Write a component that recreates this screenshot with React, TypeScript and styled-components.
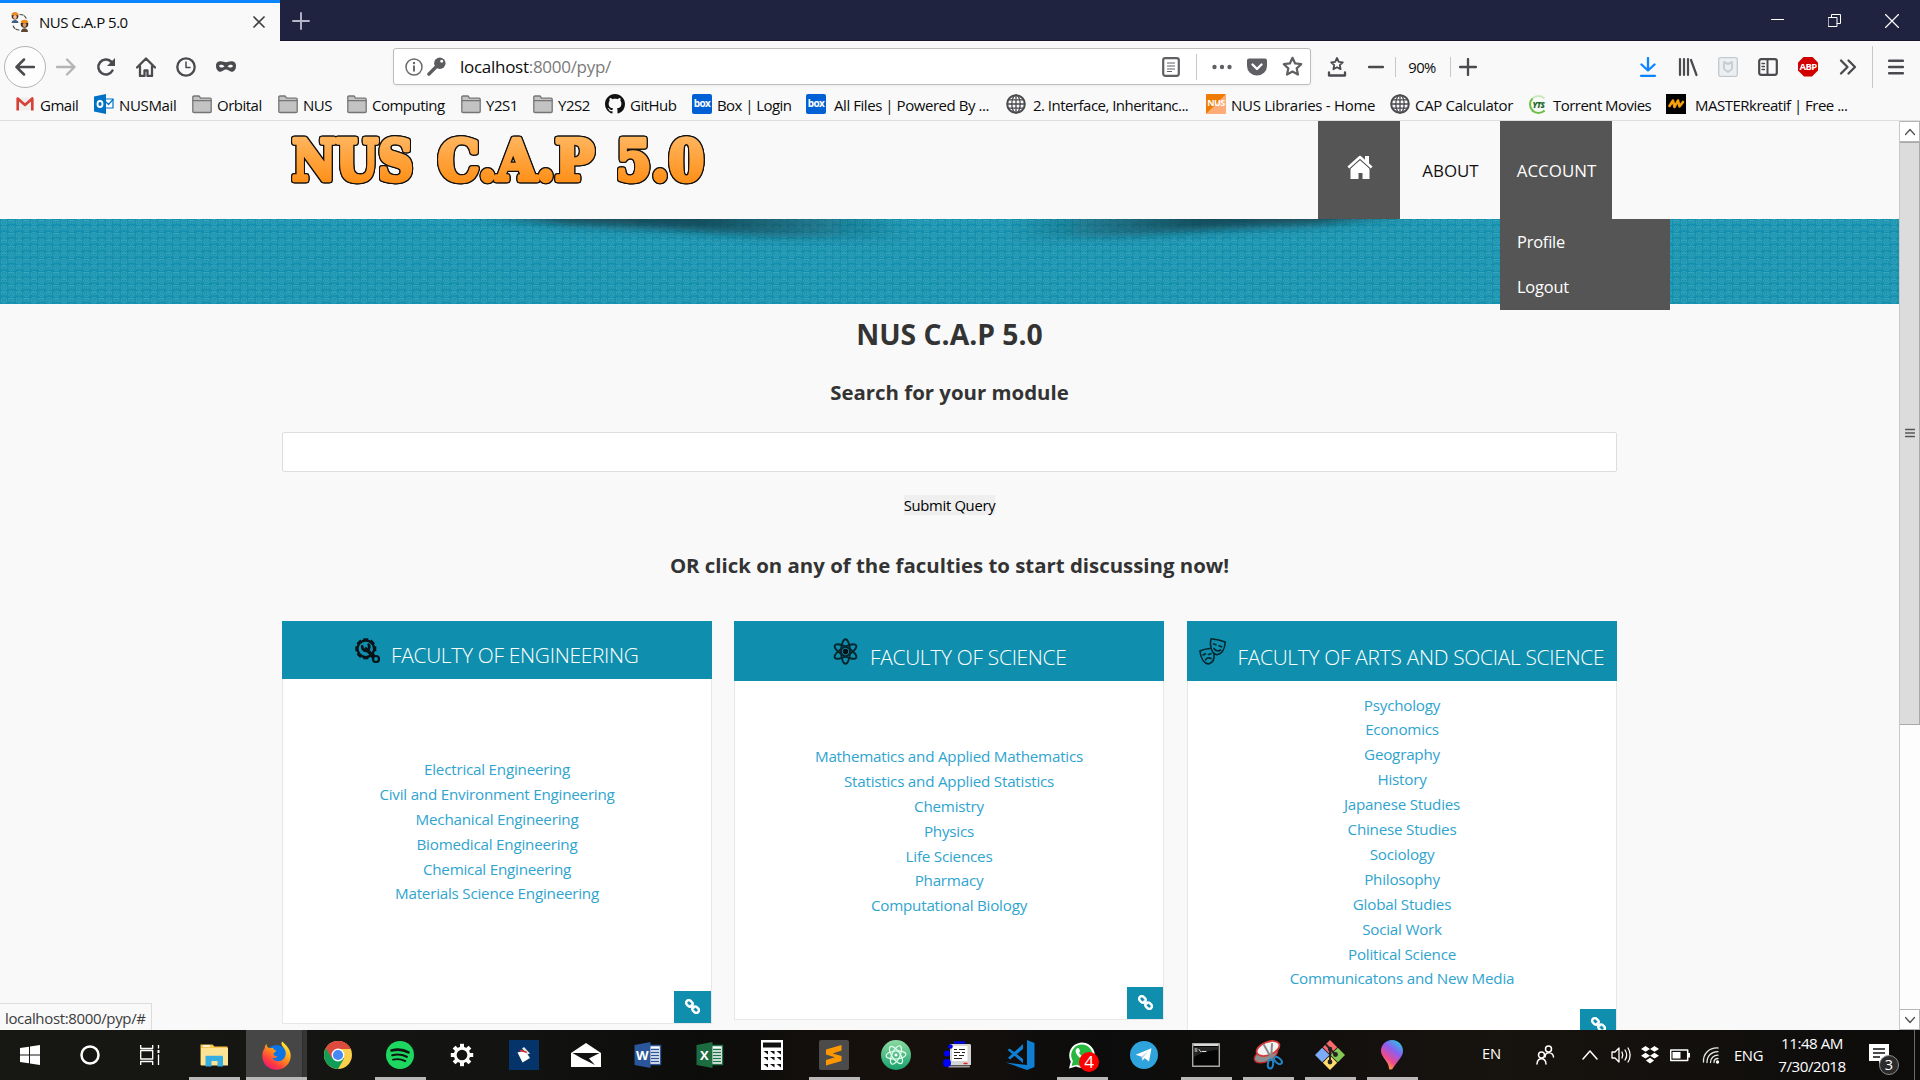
import React from "react";
import styled, { createGlobalStyle, css } from "styled-components";

const UI_FONT = `"Open Sans", "Noto Sans", sans-serif`;
const TEAL = "#0f8fad";

const GlobalStyle = createGlobalStyle`
  * { box-sizing: border-box; }
  html, body { margin: 0; padding: 0; overflow: hidden; background: #f9f9f9; }
  ul { list-style: none; margin: 0; padding: 0; }
  h1, h2, h3, p { margin: 0; }
  svg { display: block; flex: none; }
`;

const Screen = styled.div`
  width: 1920px;
  height: 1080px;
  display: flex;
  flex-direction: column;
  overflow: hidden;
  font-family: ${UI_FONT};
  white-space: nowrap;
`;

/* ---------- window chrome ---------- */

const TitleBar = styled.div`
  height: 41px;
  display: flex;
  background: #202340;
  box-shadow: inset 0 -1px 0 #15162c;
`;

const Tab = styled.div`
  width: 280px;
  display: flex;
  align-items: center;
  padding: 0 15px 0 10px;
  border-top: 3px solid #0a84ff;
  background: #f9f9f9;
`;

const TabTitle = styled.span`
  flex: 1;
  margin-left: 9px;
  font-size: 15px;
  letter-spacing: -0.5px;
  color: #0c0c0d;
`;

const NewTab = styled.div`
  width: 41px;
  display: grid;
  place-items: center;
`;

const WindowButtons = styled.div`
  margin-left: auto;
  display: flex;
`;

const WindowButton = styled.div`
  width: 57px;
  display: grid;
  place-items: center;
`;

const Toolbar = styled.div`
  height: 51px;
  display: flex;
  align-items: center;
  padding-left: 4px;
  background: #f9f9f9;
`;

const BackButton = styled.div`
  width: 42px;
  height: 42px;
  border: 1px solid #b4b4b4;
  border-radius: 50%;
  display: grid;
  place-items: center;
  background: #fdfdfd;
`;

const Tool = styled.div<{ $w?: number }>`
  width: ${(p) => p.$w ?? 40}px;
  height: 42px;
  display: grid;
  place-items: center;
`;

const ToolRule = styled.div<{ $h: number }>`
  width: 1px;
  height: ${(p) => p.$h}px;
  background: #c8c8c8;
`;

const AddressBar = styled.div`
  width: 918px;
  height: 37px;
  margin: 0 6px 0 147px;
  padding-left: 11px;
  display: flex;
  align-items: center;
  border: 1px solid #bdbdbd;
  border-radius: 3px;
  background: #fff;
  box-shadow: 0 1px 3px rgba(0, 0, 0, 0.06);
`;

const Address = styled.span`
  flex: 1;
  margin-left: 10px;
  font-size: 17px;
  letter-spacing: -0.28px;
  color: #7a7a7a;
  b { font-weight: 400; color: #0c0c0d; }
`;

const Zoom = styled.span`
  width: 52px;
  margin-right: 2px;
  text-align: center;
  font-size: 14.8px;
  letter-spacing: -0.55px;
  color: #0c0c0d;
`;

const Spacer = styled.div`
  flex: 1;
`;

const BookmarkBar = styled.div`
  height: 29px;
  display: flex;
  align-items: center;
  padding: 0 0 4px 16px;
  border-bottom: 1px solid #dedede;
  background: #f9f9f9;
`;

const Bookmark = styled.div<{ $w: number; $gap: number; $ls: number }>`
  width: ${(p) => p.$w}px;
  flex: none;
  display: flex;
  align-items: center;
  gap: ${(p) => p.$gap}px;
  font-size: 15px;
  line-height: 20px;
  letter-spacing: ${(p) => p.$ls}px;
  color: #0c0c0d;
`;

const BookmarkLabel = styled.span`
  padding-top: 2px;
`;

const BoxTile = styled.span`
  width: 20px;
  height: 20px;
  border-radius: 2px;
  background: #0061d5;
  color: #fff;
  font: 700 10px/19px "Open Sans", sans-serif;
  letter-spacing: -0.6px;
  text-align: center;
`;

const NusTile = styled.span`
  width: 20px;
  height: 20px;
  border-radius: 1px;
  background: linear-gradient(135deg, #ef7c00 0 48%, #ffab78 52% 100%);
  color: #fff;
  font: 700 9px/18px "Open Sans", sans-serif;
  letter-spacing: -0.5px;
  text-align: center;
`;

const YtsTile = styled.span`
  width: 19px;
  height: 19px;
  border: 2px solid #6ac045;
  border-right-color: transparent;
  border-top-color: #c9e8bb;
  border-radius: 50%;
  color: #1d6b2a;
  font: italic 800 8px/15px "Open Sans", sans-serif;
  letter-spacing: -0.6px;
  text-align: center;
`;

const AbpText = styled.span`
  width: 20px;
  height: 20px;
  clip-path: polygon(30% 0, 70% 0, 100% 30%, 100% 70%, 70% 100%, 30% 100%, 0 70%, 0 30%);
  background: #d00000;
  color: #fff;
  font: 700 9.5px/20px "Open Sans", sans-serif;
  letter-spacing: -0.6px;
  text-align: center;
`;

/* ---------- web page ---------- */

const Viewport = styled.div`
  height: 909px;
  display: flex;
  position: relative;
  overflow: hidden;
  background: #f9f9f9;
`;

const Page = styled.div`
  width: 1899px;
  height: 909px;
  overflow: hidden;
`;

const Container = styled.div`
  width: 1335px;
  margin: 0 auto;
`;

const Header = styled(Container)`
  height: 98px;
  display: flex;
  padding: 0 5px 0 6px;
  justify-content: space-between;
`;

const Nav = styled.nav`
  display: flex;
`;

const NavItem = styled.div<{ $w: number; $on?: boolean }>`
  position: relative;
  width: ${(p) => p.$w}px;
  height: 98px;
  display: grid;
  place-items: center;
  padding: 1px 0 0 1px;
  font-size: 16.9px;
  color: #111;
  > svg { margin-bottom: 8px; }
  ${(p) => p.$on && css`
    background: #555;
    color: #fff;
  `}
`;

const Dropdown = styled.ul`
  position: absolute;
  z-index: 2;
  top: 98px;
  left: 0;
  width: 170px;
  background: #555;
`;

const DropdownItem = styled.li`
  height: 45px;
  padding-left: 17px;
  font-size: 16.4px;
  letter-spacing: -0.2px;
  line-height: 46px;
  color: #fff;
  &:last-child { height: 46px; }
`;

const Band = styled.div`
  height: 85px;
  background: ${TEAL};
  svg { width: 100%; height: 100%; }
`;

const Hero = styled(Container)`
  height: 317px;
  display: flex;
  flex-direction: column;
  align-items: center;
  color: #333;
`;

const Title = styled.h1`
  margin-top: 11px;
  font-size: 28.3px;
  line-height: 38px;
  font-weight: 700;
`;

const Subtitle = styled.h2<{ $top: number }>`
  margin-top: ${(p) => p.$top}px;
  font-size: 20.4px;
  line-height: 28px;
  font-weight: 700;
`;

const SearchInput = styled.input`
  width: 100%;
  height: 40px;
  margin-top: 26px;
  flex: none;
  border: 1px solid #ddd;
  border-radius: 2px;
  background: #fff;
`;

const Submit = styled.button`
  height: 20px;
  margin-top: 23px;
  padding: 0;
  border: 0;
  background: #efefef;
  font: 14.8px/21px ${UI_FONT};
  letter-spacing: -0.3px;
  color: #000;
`;

const Cards = styled(Container)`
  display: grid;
  grid-template-columns: 452px 453px 430px;
  align-items: start;
`;

const Card = styled.section<{ $h: number }>`
  width: 430px;
  height: ${(p) => p.$h}px;
  display: flex;
  flex-direction: column;
`;

const CardHead = styled.header<{ $h: number; $pad: number; $gap: number }>`
  height: ${(p) => p.$h}px;
  flex: none;
  display: flex;
  padding-left: ${(p) => p.$pad}px;
  gap: ${(p) => p.$gap}px;
  background: ${TEAL};
  svg { margin-top: 17px; }
`;

const CardTitle = styled.h3`
  align-self: flex-end;
  font-size: 20.9px;
  line-height: 28px;
  padding-bottom: 10px;
  font-weight: 300;
  letter-spacing: -0.29px;
  color: #fff;
`;

const CardBody = styled.div<{ $top: number }>`
  flex: 1;
  display: flex;
  flex-direction: column;
  padding-top: ${(p) => p.$top}px;
  border: 1px solid #e7e7e7;
  border-top: 0;
  background: #fff;
`;

const Topic = styled.li`
  height: 24.9px;
  font-size: 15.2px;
  line-height: 25px;
  letter-spacing: -0.22px;
  text-align: center;
  color: #2fa4cf;
`;

const LinkButton = styled.div<{ $w: number }>`
  width: ${(p) => p.$w}px;
  height: 32px;
  margin: auto 0 0 auto;
  padding-bottom: 1px;
  display: grid;
  place-items: center;
  background: ${TEAL};
`;

const ScrollTrack = styled.div`
  width: 21px;
  display: flex;
  flex-direction: column;
  border-left: 1px solid #c8c8c8;
  background: #fdfdfd;
`;

const ScrollButton = styled.div`
  height: 21px;
  display: grid;
  place-items: center;
  border: 1px solid #b5b5b5;
  border-left: 0;
  background: #fff;
`;

const ScrollThumb = styled.div`
  height: 583px;
  margin-bottom: auto;
  padding-bottom: 2px;
  display: grid;
  place-items: center;
  border: 1px solid #a9a9a9;
  border-left: 0;
  background: #dcdcdc;
`;

const StatusText = styled.div`
  position: absolute;
  left: 0;
  bottom: 0;
  width: 152px;
  height: 27px;
  padding-left: 5px;
  border: 1px solid #dcdcdc;
  border-width: 1px 1px 0 0;
  background: #f9f9f9;
  font-size: 15px;
  line-height: 29px;
  letter-spacing: -0.35px;
  color: #3c3c3c;
`;

/* ---------- taskbar ---------- */

const Taskbar = styled.div`
  height: 50px;
  display: flex;
  background: linear-gradient(90deg, #171714 0, #131311 500px, #0c0c0b 700px, #17110d 900px, #0c0c0c 1100px, #17130f 1500px, #0d0c0b 100%);
  color: #fff;
`;

const Task = styled.div<{ $w?: number; $lift?: number }>`
  width: ${(p) => p.$w ?? 60}px;
  height: 50px;
  padding-bottom: ${(p) => p.$lift ?? 0}px;
  flex: none;
  display: grid;
  place-items: center;
`;

const AppTask = styled.div<{ $running?: boolean; $active?: boolean }>`
  width: 62px;
  height: 50px;
  flex: none;
  position: relative;
  display: grid;
  place-items: center;
  ${(p) => p.$running && css`
    background: linear-gradient(#b9b7b7, #b9b7b7) 6px 47px / 51px 3px no-repeat;
  `}
  ${(p) => p.$active && css`
    background:
      linear-gradient(#b9b7b7, #b9b7b7) 1px 47px / 61px 3px no-repeat,
      linear-gradient(90deg, #464646 56px, #2c2c2c 56px 57px, #363636 57px) 1px 0 / 61px 50px no-repeat;
  `}
`;

const Badge = styled.span`
  position: absolute;
  left: 28px;
  top: 22px;
  width: 20px;
  height: 20px;
  border-radius: 50%;
  background: #f00;
  font-size: 17px;
  line-height: 19px;
  text-align: center;
`;

const TrayText = styled.span`
  font-size: 14.8px;
  letter-spacing: -0.3px;
`;

const Clock = styled.div`
  width: 84px;
  display: flex;
  flex-direction: column;
  align-items: center;
  padding-top: 2px;
  font-size: 15.2px;
  line-height: 23px;
  letter-spacing: -0.5px;
`;

const Notifications = styled.div`
  position: relative;
  width: 61px;
  height: 50px;
  border-right: 1px solid #6a6a6a;
  svg { margin: 14px 0 0 15px; }
`;

const NoticeCount = styled.span`
  position: absolute;
  left: 25px;
  top: 25px;
  width: 20px;
  height: 20px;
  border: 1px solid #8b8b8b;
  border-radius: 50%;
  background: #2b2b2b;
  font-size: 14.5px;
  line-height: 18px;
  text-align: center;
`;

/* ---------- icons ---------- */

type IconProps = { size?: number; w?: number; h?: number; box?: string; children: React.ReactNode };

const Icon = ({ size = 20, w, h, box = "0 0 20 20", children }: IconProps) => (
  <svg width={w ?? size} height={h ?? size} viewBox={box} fill="none" strokeLinecap="round" strokeLinejoin="round">
    {children}
  </svg>
);

const INK = "#4a4a4f";

const Folder = () => (
  <Icon>
    <path d="M.8 17.5V3.2c0-.8.5-1.2 1.2-1.2h5l1.6 2.2H18c.8 0 1.2.5 1.2 1.2v12.1c0 .6-.4 1-1.2 1H2c-.7 0-1.2-.4-1.2-1z" fill="#c3c3c3" stroke="#757575" strokeWidth="1.3" />
    <path d="M1 6.6h18" stroke="#757575" strokeWidth="1.1" />
  </Icon>
);

const Globe = () => (
  <Icon>
    <circle cx="10" cy="10" r="8.8" stroke={INK} strokeWidth="2" />
    <ellipse cx="10" cy="10" rx="4.2" ry="8.8" stroke={INK} strokeWidth="1.3" />
    <path d="M10 1v18M1.5 10h17M2.6 5.8h14.8M2.6 14.2h14.8" stroke={INK} strokeWidth="1.3" />
  </Icon>
);

const Gmail = () => (
  <Icon>
    <path d="M.5 3.500h17v13H.5z" fill="#eee" />
    <path d="M1.700 16.500V4.500L9 11l7.300-6.500v12" stroke="#d93f35" strokeWidth="2.6" strokeLinecap="butt" />
  </Icon>
);

const Outlook = () => (
  <Icon>
    <path d="M10 5h9v9h-9z" fill="#fff" stroke="#0072c6" strokeWidth="1.2" />
    <path d="M11 7l3.5 3.5L19 5.5" stroke="#0072c6" strokeWidth="1.2" />
    <path d="M0 2.5L12 0v20L0 17.5z" fill="#0072c6" />
    <ellipse cx="6" cy="10" rx="2.5" ry="3" stroke="#fff" strokeWidth="1.8" />
  </Icon>
);

const GitHub = () => (
  <Icon size={20} box="0 0 16 16">
    <path fill="#111" d="M8 0C3.58 0 0 3.58 0 8c0 3.54 2.29 6.53 5.47 7.59.4.07.55-.17.55-.38 0-.19-.01-.82-.01-1.49-2.01.37-2.53-.49-2.69-.94-.09-.23-.48-.94-.82-1.13-.28-.15-.68-.52-.01-.53.63-.01 1.08.58 1.23.82.72 1.21 1.87.87 2.33.66.07-.52.28-.87.51-1.07-1.78-.2-3.64-.89-3.64-3.95 0-.87.31-1.59.82-2.15-.08-.2-.36-1.02.08-2.12 0 0 .67-.21 2.2.82.64-.18 1.32-.27 2-.27s1.36.09 2 .27c1.53-1.04 2.2-.82 2.2-.82.44 1.1.16 1.92.08 2.12.51.56.82 1.27.82 2.15 0 3.07-1.87 3.75-3.65 3.95.29.25.54.73.54 1.48 0 1.07-.01 1.93-.01 2.2 0 .21.15.46.55.38A8.01 8.01 0 0 0 16 8c0-4.42-3.58-8-8-8z" />
  </Icon>
);

const Kreatif = () => (
  <Icon>
    <path d="M0 0h20v20H0z" fill="#000" />
    <path d="M3.500 12l3.500-5.500L8.500 13 12 6.500l1.500 6L17 8" stroke="#f6a10a" strokeWidth="2.600" />
  </Icon>
);

const Favicon = () => (
  <Icon size={20}>
    <circle cx="5" cy="4" r="3.4" fill="#3b2a20" />
    <path d="M1.6 3.2a3.4 3 0 0 1 6.8 0z" fill="#f08c1e" />
    <circle cx="5" cy="5" r="1.9" fill="#f2c09a" />
    <path d="M1.5 11c0-4 7-4 7 0z" fill="#3f5f7d" />
    <circle cx="14.5" cy="12" r="3.8" fill="#3b2a20" />
    <path d="M10.8 11a3.7 3.2 0 0 1 7.4 0z" fill="#f08c1e" />
    <circle cx="14.5" cy="13" r="2" fill="#d99a62" />
    <path d="M11 20c0-5 7-5 7 0z" fill="#5a4632" />
    <path d="M10 2.500c3 0 5.500 1.500 6.200 4.200M9 18c-3 0-5-1.600-6-4.500" stroke="#444" strokeWidth="1.1" strokeDasharray="3 1.500" />
  </Icon>
);

const star = "M10 1.700l2.500 5.400 5.800.7-4.300 4 1.200 5.900L10 14.800l-5.200 2.900L6 11.800l-4.300-4 5.800-.7z";

const Gear = () => (
  <Icon size={24} box="0 0 24 24">
    {[0, 45, 90, 135, 180, 225, 270, 315].map((a) => (
      <path key={a} d="M12 .8v4.500" stroke="#fff" strokeWidth="4" strokeLinecap="butt" transform={`rotate(${a} 12 12)`} />
    ))}
    <circle cx="12" cy="12" r="6.800" stroke="#fff" strokeWidth="2.900" />
  </Icon>
);

const ChainIcon = () => (
  <Icon size={15} box="0 0 15 15">
    <g stroke="#fff" strokeWidth="2.400" transform="rotate(45 7.500 7.500)">
      <rect x="-.4" y="4.900" width="7" height="5.200" rx="2.600" />
      <rect x="8.400" y="4.900" width="7" height="5.200" rx="2.600" />
      <path d="M5.500 7.500h4" strokeWidth="1.800" />
    </g>
  </Icon>
);

const EngineeringIcon = () => (
  <Icon size={25} box="0 0 25 25">
    {[0, 45, 90, 135, 180, 225, 270, 315].map((a) => (
      <path key={a} d="M10.800 .3v3" stroke="#0a1418" strokeWidth="5" strokeLinecap="butt" transform={`rotate(${a} 10.800 10.800)`} />
    ))}
    <circle cx="10.800" cy="10.800" r="8.300" fill={TEAL} stroke="#0a1418" strokeWidth="2.300" />
    <path d="M11 11l8 8" stroke="#0a1418" strokeWidth="3.600" />
    <path d="M7.200 8.500c0 3.400 2.800 4.800 5 4 2.200-1 2.600-3.600 1.500-5.800" stroke="#0a1418" strokeWidth="2.800" />
    <circle cx="21" cy="21" r="3" fill={TEAL} stroke="#0a1418" strokeWidth="2.200" />
  </Icon>
);

const ScienceIcon = () => (
  <Icon w={25} h={27} box="0 0 25 27">
    {[0, 60, 120].map((a) => (
      <ellipse key={a} cx="12.500" cy="13.500" rx="4.400" ry="12.300" stroke="#06262e" strokeWidth="1.900" transform={`rotate(${a} 12.500 13.500)`} />
    ))}
    <circle cx="12.500" cy="13.500" r="2.700" fill="#031216" />
  </Icon>
);

const ArtsIcon = () => (
  <Icon size={27} box="0 0 27 27">
    <g stroke="#06262e" strokeWidth="1.600">
      <path d="M12 .8c5 .6 9.500 1.400 14.200 3.200-.3 7-3.500 12-8.500 12.700C12.500 15.500 10.500 8 12 .8z" />
      <path d="M14.500 6l2.500.8M20 7.800l2.600 1M15 10.500c1.500 2.500 4.500 3 6.500 1.500" />
      <path d="M10.700 10.500C7 10.800 4 11.500.9 13c.8 6.500 3.800 12.500 8.800 13 4.500-1.500 5.800-6 5.300-10" />
      <path d="M4 17l2.500-1.200M9.500 16.500l2.500-.8M6.500 22c1-2.200 3.500-2.700 5.500-1.500" />
    </g>
  </Icon>
);

const Office = ({ color, dark, letter }: { color: string; dark: string; letter: string }) => (
  <Icon w={28} h={26} box="0 0 28 26">
    <path d="M14 3.500h12.500v19H14z" fill="#fff" stroke={color} strokeWidth="1.400" />
    <path d="M17 7.500h8M17 10.500h8M17 13.500h8M17 16.500h8M17 19.500h8" stroke={color} strokeWidth="1.300" strokeLinecap="butt" />
    <path d="M.5 3L16.500 0v26L.5 23z" fill={dark} />
    <text x="8.300" y="18" fontSize="13" fontWeight="700" fill="#fff" textAnchor="middle" fontFamily="Open Sans, sans-serif">{letter}</text>
  </Icon>
);

const Explorer = () => (
  <Icon w={28} h={24} box="0 0 28 24">
    <path d="M.5 1.500h12l2 2H27a.7.7 0 0 1 .7.700V22H.5z" fill="#f7c64b" />
    <path d="M1 5h27v17.500H1z" fill="#ffe394" />
    <path d="M3.500 3h6" stroke="#fff" strokeWidth="1.600" />
    <path d="M5.500 23.500V14c0-.8.5-1.300 1.300-1.300h15c.8 0 1.200.5 1.200 1.300v9.500h-5.500V18h-6v5.500z" fill="#37aee2" />
  </Icon>
);

const Firefox = () => (
  <Icon size={29} box="0 0 29 29">
    <defs>
      <linearGradient id="fx" x1=".85" y1=".05" x2=".2" y2="1">
        <stop offset="0" stopColor="#fff03a" />
        <stop offset=".4" stopColor="#ff9a1c" />
        <stop offset=".75" stopColor="#ff3a3f" />
        <stop offset="1" stopColor="#e3168b" />
      </linearGradient>
    </defs>
    <circle cx="14.500" cy="14.500" r="10.500" fill="#0b74e6" />
    <path d="M20 .5c-1.500 3 .8 5 2.500 7.500 2 3 1.500 7.500-1 10-3.500 3.500-9.500 2.500-11-1.200 2 .7 4 0 5-1.300-1.500.1-3.200-.3-3.800-1.700-.5-1.300.2-2 .9-2.400 1-.6 1.600-1.200 1.600-2-1.800 0-2.800-1-3-2.600C9 7.300 6.500 7 5.500 6 4.800 5 4.600 4 4.600 3 2.500 4.500 2.800 7 2.800 7 1 9 .3 12 .3 15c0 8 6.300 13.800 14 13.800 8 0 14.400-6 14.400-14C28.700 8 24 4 20 .5z" fill="url(#fx)" />
  </Icon>
);

const Chrome = () => (
  <Icon size={28} box="0 0 28 28">
    <circle cx="14" cy="14" r="14" fill="#fcd04b" />
    <path d="M14 14L1.900 7A14 14 0 0 0 14 28l6.060-10.500z" fill="#109d58" />
    <path d="M14 14L1.900 7A14 14 0 0 1 26.100 7l.6 1H14z" fill="#dd4b3e" />
    <path d="M1.900 7l6 10.500L14 8h12.600A14 14 0 0 0 1.900 7z" fill="#dd4b3e" />
    <circle cx="14" cy="14" r="6.400" fill="#fff" />
    <circle cx="14" cy="14" r="5.100" fill="#4688f4" />
  </Icon>
);

const Spotify = () => (
  <Icon size={28} box="0 0 28 28">
    <circle cx="14" cy="14" r="14" fill="#1ed760" />
    <path d="M5.500 9.500c6-1.600 12-1 17 1.800" stroke="#10130f" strokeWidth="2.600" />
    <path d="M6.300 14.200c5-1.300 10-.8 14.500 1.600" stroke="#10130f" strokeWidth="2.200" />
    <path d="M7 18.600c4.400-1 8.500-.6 12.300 1.500" stroke="#10130f" strokeWidth="1.900" />
  </Icon>
);

const AppIcons = {
  diagram: (
    <Icon size={30} box="0 0 30 30">
      <path d="M0 0h30v30H0z" fill="#05346b" />
      <path d="M8.500 12.500l7.500-2L21 18l-7.500 4.500z" fill="#fff" />
      <path d="M13 8.500l2-1.500 6 6.500-2.500 1z" fill="#e5e5e5" />
      <path d="M11.500 10.500l5.500 1.500" stroke="#e3262e" strokeWidth="1.800" />
    </Icon>
  ),
  mail: (
    <Icon w={30} h={24} box="0 0 30 24">
      <path d="M0 10L15 0l15 10v14H0z" fill="#fff" />
      <path d="M1.500 10h27L18 15.500l6 6.500L10.500 15.300z" fill="#111" />
    </Icon>
  ),
  calc: (
    <Icon w={22} h={30} box="0 0 22 30">
      <path d="M0 0h22v30H0z" fill="#fff" />
      <path d="M2 2.500h18v5H2z" fill="#111" />
      {[11, 17, 24].map((y) => [3, 9.5, 16].map((x) => <path key={`${x}-${y}`} d={`M${x - 0.5} ${y}h4.500v3.500z`} fill="#111" />))}
    </Icon>
  ),
  sublime: (
    <Icon size={30} box="0 0 30 30">
      <rect width="30" height="30" rx="2" fill="#4b4b4b" />
      <path d="M22.500 5v5.500l-9 3 9 2.600V21L7 25.500V20l9-2.800-9-2.700V9.500z" fill="#ff9800" />
    </Icon>
  ),
  atom: (
    <Icon size={30} box="0 0 30 30">
      <defs>
        <linearGradient id="atom" x1="0" y1="0" x2="0" y2="1">
          <stop offset="0" stopColor="#8bdba2" />
          <stop offset="1" stopColor="#18a06c" />
        </linearGradient>
      </defs>
      <circle cx="15" cy="15" r="15" fill="url(#atom)" />
      {[25, 85, 145].map((a) => (
        <ellipse key={a} cx="15" cy="15" rx="4" ry="10" stroke="#eafff2" strokeWidth="1.200" transform={`rotate(${a} 15 15)`} />
      ))}
      <circle cx="15" cy="15" r="1.500" fill="#fff" />
    </Icon>
  ),
  editor: (
    <Icon w={30} h={28} box="0 0 30 28">
      <path d="M7 3h20l1 1v20H7z" fill="#d5d5d5" />
      <path d="M9 5h15.500v15H9z" fill="#fff" />
      <path d="M11 8.500h3M16 8.500h6M11 11.500h6M19 11.500h3M11 14.500h3M16 14.500h5M11 17.500h8" stroke="#222" strokeWidth="1.200" strokeLinecap="butt" />
      <path d="M6 25.500h20" stroke="#999" strokeWidth="2" />
      <path d="M12 1.500h9" stroke="#00f" strokeWidth="2.400" strokeDasharray="1.500 2.200" />
      <circle cx="7.500" cy="5.500" r="2.300" fill="#00f" />
      <circle cx="4" cy="12.500" r="3" fill="#00f" />
      <circle cx="4" cy="22" r="4" fill="#00f" />
      <path d="M21 22.500h3" stroke="#d22" strokeWidth="1.300" />
    </Icon>
  ),
  vscode: (
    <Icon size={30} box="0 0 30 30">
      <path d="M22 0l7.500 3v24L22 30 .8 22.600 22 25z" fill="#0f7fd4" />
      <path d="M2.500 10L4.500 8.500 18 19v4zM3 17.800L18 4v5L5 19.500z" fill="#0f7fd4" />
    </Icon>
  ),
  whatsapp: (
    <Icon size={30} box="0 0 30 30">
      <path d="M2 28.500l1.800-7A12.800 12.800 0 1 1 9 26.600z" fill="#fff" />
      <path d="M4.600 26l1.300-5A10.700 10.700 0 1 1 10 24.700z" fill="#29b83f" />
      <path d="M9.500 9c1-1.500 2.300-1.200 2.700 0l.8 2c.2.600-.9 1.300-.9 1.800.9 2 2.600 3.500 4.800 4.200.6-.2 1.200-1.500 1.900-1.300l2.400 1.200c.5 1.500-1.500 3.200-3.400 3-4.500-.6-9.200-5.200-9.200-9.200 0-.7.400-1.300.9-1.700z" fill="#fff" />
    </Icon>
  ),
  telegram: (
    <Icon size={28} box="0 0 28 28">
      <circle cx="14" cy="14" r="14" fill="#2fa3dc" />
      <path d="M5.500 13.700L21.500 7.300 19 20.500l-4.300-3.200-2.600 2.500-.4-4z" fill="#fff" />
      <path d="M11.600 15.600l7-6-5.500 7-1 3z" fill="#b9d8ea" />
    </Icon>
  ),
  cmd: (
    <Icon w={28} h={24} box="0 0 28 24">
      <path d="M.7.700h26.600v22.600H.7z" fill="#050505" stroke="#a9a9a9" strokeWidth="1.400" />
      <path d="M1.500 2h25" stroke="#d8d8d8" strokeWidth="2" strokeLinecap="butt" />
      <path d="M3 6h2M3 8h2M7 6.500l1.500 2M10 8.500h4" stroke="#e4e4e4" strokeWidth="1" />
      <path d="M2 14c8-5 16-7 24-7v-3H2z" fill="#fff" opacity=".13" />
    </Icon>
  ),
  snip: (
    <Icon size={30} box="0 0 30 30">
      <ellipse cx="13" cy="15" rx="12.500" ry="6.500" fill="#8e8e8e" stroke="#c22" strokeWidth="1.200" transform="rotate(-25 13 15)" />
      <ellipse cx="15" cy="8.500" rx="12" ry="6.500" fill="#f3f3f3" stroke="#d53a3a" strokeWidth="1.800" transform="rotate(-22 15 8.500)" />
      <path d="M11 5l9 16M19 4l-1 16" stroke="#888" strokeWidth="2" />
      <ellipse cx="17.500" cy="24" rx="2.600" ry="4.600" stroke="#1f86c6" strokeWidth="2" transform="rotate(8 17.500 24)" />
      <ellipse cx="25" cy="20.500" rx="2.500" ry="4.600" stroke="#1f86c6" strokeWidth="2" transform="rotate(-50 25 20.500)" />
    </Icon>
  ),
  git: (
    <Icon size={30} box="0 0 30 30">
      <path d="M15 0l7.200 7.200L15 14.500 7.800 7.200z" fill="#f76a6c" />
      <path d="M7.200 7.800l7.300 7.200-7.300 7.200L0 15z" fill="#7cabf8" />
      <path d="M22.800 7.800L30 15l-7.200 7.200-7.300-7.200z" fill="#85c853" />
      <path d="M15 15.500l7.200 7.300L15 30l-7.200-7.200z" fill="#ffdb6b" />
      <path d="M11 4.500l4 4.500v13M15 9l5.500 5.500" stroke="#222" strokeWidth="1.900" />
      <circle cx="15" cy="9" r="2.200" fill="#222" />
      <circle cx="20.500" cy="14.500" r="2.400" fill="#222" />
      <circle cx="15" cy="22" r="2.400" fill="#222" />
    </Icon>
  ),
  paint: (
    <Icon w={24} h={30} box="0 0 24 30">
      <defs>
        <linearGradient id="p3d" x1=".9" y1="0" x2=".3" y2="1">
          <stop offset="0" stopColor="#19d5e6" />
          <stop offset=".4" stopColor="#8a5ff0" />
          <stop offset=".72" stopColor="#f0488f" />
          <stop offset="1" stopColor="#ffb02e" />
        </linearGradient>
      </defs>
      <path d="M12 0c6.500 0 11 5 11 11 0 6-6 10.500-10 17-.5 1.500-4 2.500-4 .5C9 22 1 17 1 11 1 5 5.500 0 12 0z" fill="url(#p3d)" />
    </Icon>
  ),
};

const apps: { key: string; icon: React.ReactNode; running?: boolean; active?: boolean; badge?: string }[] = [
  { key: "explorer", icon: <Explorer />, running: true },
  { key: "firefox", icon: <Firefox />, active: true },
  { key: "chrome", icon: <Chrome /> },
  { key: "spotify", icon: <Spotify />, running: true },
  { key: "settings", icon: <Gear /> },
  { key: "diagram", icon: AppIcons.diagram },
  { key: "mail", icon: AppIcons.mail },
  { key: "word", icon: <Office color="#2b579a" dark="#2b579a" letter="W" /> },
  { key: "excel", icon: <Office color="#217346" dark="#1d6b40" letter="X" /> },
  { key: "calc", icon: AppIcons.calc },
  { key: "sublime", icon: AppIcons.sublime, running: true },
  { key: "atom", icon: AppIcons.atom },
  { key: "editor", icon: AppIcons.editor },
  { key: "vscode", icon: AppIcons.vscode },
  { key: "whatsapp", icon: AppIcons.whatsapp, running: true, badge: "4" },
  { key: "telegram", icon: AppIcons.telegram },
  { key: "cmd", icon: AppIcons.cmd, running: true },
  { key: "snip", icon: AppIcons.snip, running: true },
  { key: "git", icon: AppIcons.git, running: true },
  { key: "paint", icon: AppIcons.paint, running: true },
];

const bookmarks: { label: string; icon: React.ReactNode; w: number; gap?: number; ls?: number }[] = [
  { label: "Gmail", icon: <Gmail />, w: 78, gap: 4 },
  { label: "NUSMail", icon: <Outlook />, w: 98, ls: -0.35 },
  { label: "Orbital", icon: <Folder />, w: 86 },
  { label: "NUS", icon: <Folder />, w: 69 },
  { label: "Computing", icon: <Folder />, w: 114 },
  { label: "Y2S1", icon: <Folder />, w: 72 },
  { label: "Y2S2", icon: <Folder />, w: 72 },
  { label: "GitHub", icon: <GitHub />, w: 87 },
  { label: "Box | Login", icon: <BoxTile>box</BoxTile>, w: 114, ls: -0.57 },
  { label: "All Files | Powered By ...", icon: <BoxTile>box</BoxTile>, w: 200, gap: 8, ls: -0.44 },
  { label: "2. Interface, Inheritanc...", icon: <Globe />, w: 200, gap: 7, ls: -0.52 },
  { label: "NUS Libraries - Home", icon: <NusTile>NUS</NusTile>, w: 184, ls: -0.3 },
  { label: "CAP Calculator", icon: <Globe />, w: 139, ls: -0.32 },
  { label: "Torrent Movies", icon: <YtsTile>YTS</YtsTile>, w: 137, ls: -0.54 },
  { label: "MASTERkreatif | Free ...", icon: <Kreatif />, w: 200, gap: 9, ls: -0.5 },
];

const faculties = [
  {
    name: "FACULTY OF ENGINEERING", icon: <EngineeringIcon />, h: 403, head: 58, pad: 73, gap: 11, top: 78, link: 37,
    topics: ["Electrical Engineering", "Civil and Environment Engineering", "Mechanical Engineering", "Biomedical Engineering", "Chemical Engineering", "Materials Science Engineering"],
  },
  {
    name: "FACULTY OF SCIENCE", icon: <ScienceIcon />, h: 399, head: 60, pad: 99, gap: 12, top: 63, link: 36,
    topics: ["Mathematics and Applied Mathematics", "Statistics and Applied Statistics", "Chemistry", "Physics", "Life Sciences", "Pharmacy", "Computational Biology"],
  },
  {
    name: "FACULTY OF ARTS AND SOCIAL SCIENCE", icon: <ArtsIcon />, h: 421, head: 60, pad: 12, gap: 11.5, top: 11.6, link: 36,
    topics: ["Psychology", "Economics", "Geography", "History", "Japanese Studies", "Chinese Studies", "Sociology", "Philosophy", "Global Studies", "Social Work", "Political Science", "Communicatons and New Media"],
  },
];

const LogoText = styled.text`
  font: 700 56px "DejaVu Serif", serif;
  fill: url(#logoFill);
  stroke: url(#logoFill);
  stroke-width: 4.6px;
  stroke-linejoin: round;
`;

const LogoSvg = styled.svg`
  filter: drop-shadow(1px 0 0 #111) drop-shadow(-1px 0 0 #111) drop-shadow(0 1px 0 #111) drop-shadow(0 -1px 0 #111);
`;

const Logo = () => (
  <LogoSvg width="440" height="98" viewBox="0 0 440 98">
    <defs>
      <linearGradient id="logoFill" gradientUnits="userSpaceOnUse" x1="0" y1="16" x2="0" y2="62">
        <stop offset="0" stopColor="#ffb55e" />
        <stop offset="1" stopColor="#ff8f17" />
      </linearGradient>
    </defs>
    <LogoText x="4" y="58.500" textLength="121" lengthAdjust="spacingAndGlyphs">NUS</LogoText>
    <LogoText x="150" y="58.500" textLength="156" lengthAdjust="spacingAndGlyphs">C.A.P</LogoText>
    <LogoText x="328" y="58.500" textLength="88" lengthAdjust="spacingAndGlyphs">5.0</LogoText>
  </LogoSvg>
);

const SHADE = "#143c48";

const BandArt = () => (
  <Band>
    <svg>
      <defs>
        <pattern id="scales" width="15" height="13" patternUnits="userSpaceOnUse">
          <g fill="none" stroke="#41abc0" strokeWidth=".7">
            <circle cx="4" cy="3.300" r="2.900" />
            <circle cx="4" cy="3.300" r="1.200" />
            <circle cx="11.500" cy="9.800" r="2.900" />
            <circle cx="11.500" cy="9.800" r="1.200" />
            <path d="M8.500 4.500a3 3 0 0 1 6 0M10 5a1.500 1.500 0 0 1 3 0M1 11a3 3 0 0 1 6 0M2.500 11.500a1.500 1.500 0 0 1 3 0M8 1.500h6.500M.5 8h6.500" />
          </g>
        </pattern>
        <linearGradient id="shadeL" gradientUnits="userSpaceOnUse" x1="450" y1="0" x2="910" y2="0">
          <stop offset="0" stopColor={SHADE} stopOpacity="0" />
          <stop offset=".25" stopColor={SHADE} stopOpacity=".85" />
          <stop offset=".55" stopColor={SHADE} stopOpacity=".8" />
          <stop offset="1" stopColor={SHADE} stopOpacity="0" />
        </linearGradient>
        <linearGradient id="shadeR" gradientUnits="userSpaceOnUse" x1="1425" y1="0" x2="1010" y2="0">
          <stop offset="0" stopColor={SHADE} stopOpacity="0" />
          <stop offset=".25" stopColor={SHADE} stopOpacity=".85" />
          <stop offset=".55" stopColor={SHADE} stopOpacity=".8" />
          <stop offset="1" stopColor={SHADE} stopOpacity="0" />
        </linearGradient>
        <filter id="soft" x="-10%" y="-100%" width="120%" height="300%">
          <feGaussianBlur stdDeviation="5" />
        </filter>
      </defs>
      <rect width="100%" height="100%" fill="#148fad" />
      <rect width="100%" height="100%" fill="url(#scales)" />
      <path d="M450 -20H915V20L780 18L680 11L560 5L450 -3z" fill="url(#shadeL)" filter="url(#soft)" />
      <path d="M1425 -20H1005V20L1110 18L1210 11L1320 5L1425 -3z" fill="url(#shadeR)" filter="url(#soft)" />
    </svg>
  </Band>
);

export default function App() {
  return (
    <Screen>
      <GlobalStyle />
      <TitleBar>
        <Tab>
          <Favicon />
          <TabTitle>NUS C.A.P 5.0</TabTitle>
          <Icon size={12} box="0 0 12 12"><path d="M1 1l10 10M11 1L1 11" stroke="#3f3f44" strokeWidth="1.700" /></Icon>
        </Tab>
        <NewTab><Icon size={18} box="0 0 18 18"><path d="M9 1v16M1 9h16" stroke="#b5b6c8" strokeWidth="1.900" /></Icon></NewTab>
        <WindowButtons>
          <WindowButton><Icon size={13} box="0 0 13 13"><path d="M.5 5.500h12.500" stroke="#fff" /></Icon></WindowButton>
          <WindowButton><Icon size={13} box="0 0 13 13"><path d="M.5 3.500h8.500v9H.5zM3.500 3.500v-3h9v9H9" stroke="#fff" /></Icon></WindowButton>
          <WindowButton><Icon size={14} box="0 0 14 14"><path d="M.5.500l13 13M13.500.500l-13 13" stroke="#fff" strokeWidth="1.200" /></Icon></WindowButton>
        </WindowButtons>
      </TitleBar>

      <Toolbar>
        <BackButton><Icon><path d="M19 10H1.500M9 2.500L1.500 10 9 17.500" stroke={INK} strokeWidth="2.500" /></Icon></BackButton>
        <Tool><Icon><path d="M1 10h17.500M11 2.500l7.500 7.500-7.500 7.500" stroke="#b4b4b6" strokeWidth="2.300" /></Icon></Tool>
        <Tool>
          <Icon>
            <path d="M16.500 13.500A7.500 7.500 0 1 1 15 4.500l2 2" stroke={INK} strokeWidth="2.500" />
            <path d="M19 1v8h-8z" fill={INK} />
          </Icon>
        </Tool>
        <Tool>
          <Icon>
            <path d="M1 10.500L10 1.500l9 9M4 9.500V19h4.500v-5.500h3V19H16V9.500" stroke={INK} strokeWidth="2.300" />
          </Icon>
        </Tool>
        <Tool><Icon><circle cx="10" cy="10" r="8.700" stroke={INK} strokeWidth="2.300" /><path d="M10 5v5.500h4" stroke={INK} strokeWidth="1.500" /></Icon></Tool>
        <Tool>
          <Icon>
            <path fillRule="evenodd" fill={INK} d="M5 4.200c2 0 3.500 1 5 1s3-1 5-1c3 0 5 1.200 5 4.500 0 4-2 6-4.500 6-2 0-3.500-2.200-5.500-2.200s-3.500 2.200-5.500 2.200S0 12.700 0 8.700C0 5.400 2 4.200 5 4.200zM3 9c1 2 4 2 5.500.2C7 7.300 4 7 3 9zm14 0c-1-2-4-1.700-5.500.2C13 11 16 11 17 9z" />
          </Icon>
        </Tool>
        <AddressBar>
          <Icon size={18} box="0 0 18 18"><circle cx="9" cy="9" r="8" stroke="#6a6a6e" strokeWidth="1.500" /><path d="M9 8.300v4.500" stroke="#6a6a6e" strokeWidth="2" /><circle cx="9" cy="5" r="1.200" fill="#6a6a6e" /></Icon>
          <Tool $w={27}>
            <Icon size={19}>
              <circle cx="13.500" cy="6.500" r="6" fill="#5c5c60" />
              <path d="M11 9L2 18" stroke="#5c5c60" strokeWidth="3.600" />
              <circle cx="15.500" cy="4.500" r="1.500" fill="#fff" />
            </Icon>
          </Tool>
          <Address><b>localhost</b>:8000/pyp/</Address>
          <Tool $w={34}><Icon size={20}><rect x="2.200" y="1.200" width="15.600" height="17.600" rx="2" stroke="#606064" strokeWidth="2.200" /><path d="M6.500 6h7M6.500 9h7M6.500 12h7M6.500 14.500h4" stroke="#606064" strokeWidth="1.200" /></Icon></Tool>
          <Tool $w={16}><ToolRule $h={26} /></Tool>
          <Tool $w={36}><Icon><circle cx="2.500" cy="10" r="2.200" fill="#606064" /><circle cx="10" cy="10" r="2.200" fill="#606064" /><circle cx="17.500" cy="10" r="2.200" fill="#606064" /></Icon></Tool>
          <Tool $w={34}><Icon><path d="M2 1.500h16a2 2 0 0 1 2 2V9a10 9.500 0 0 1-20 0V3.500a2 2 0 0 1 2-2z" fill="#606064" /><path d="M5.500 7.500L10 12l4.500-4.500" stroke="#fff" strokeWidth="2.400" /></Icon></Tool>
          <Tool $w={36}><Icon size={21}><path d={star} stroke="#606064" strokeWidth="2.100" /></Icon></Tool>
        </AddressBar>
        <Tool>
          <Icon>
            <path d="M10 1l1.800 3.800 4 .5-3 2.800.8 4.100L10 10.200l-3.600 2 .8-4.100-3-2.800 4-.5z" stroke={INK} strokeWidth="1.800" />
            <path d="M2 15.500v3h16v-3" stroke={INK} strokeWidth="2.300" />
          </Icon>
        </Tool>
        <Tool $w={38}><Icon size={16} box="0 0 16 16"><path d="M1 8h14" stroke={INK} strokeWidth="2.400" /></Icon></Tool>
        <ToolRule $h={20} />
        <Zoom>90%</Zoom>
        <ToolRule $h={20} />
        <Tool $w={34}><Icon size={18} box="0 0 18 18"><path d="M9 1v16M1 9h16" stroke={INK} strokeWidth="2.300" /></Icon></Tool>
        <Spacer />
        <Tool><Icon><path d="M10 1v12M3.500 7.500L10 13.500l6.500-6M3 18.800h14" stroke="#0a84ff" strokeWidth="2.300" /></Icon></Tool>
        <Tool><Icon><path d="M2 2v16M6 2v16M10 2v16M13 3l5.500 15" stroke={INK} strokeWidth="2.200" /></Icon></Tool>
        <Tool><Icon><rect x=".7" y=".7" width="18.600" height="18.600" rx="1.500" fill="#eceff2" stroke="#c2c8cf" strokeWidth="1.300" /><path d="M6 5l4 2 4-2v7l-4 3-4-3z" stroke="#c9ced4" strokeWidth="2" /></Icon></Tool>
        <Tool><Icon><rect x="1.200" y="2.200" width="17.600" height="15.600" rx="2" stroke={INK} strokeWidth="2.200" /><path d="M9.500 3v14" stroke={INK} strokeWidth="2" /><path d="M4 6.500h2.500M4 9.500h2.500M4 12.500h2.500" stroke={INK} strokeWidth="1.300" /></Icon></Tool>
        <Tool><AbpText>ABP</AbpText></Tool>
        <Tool><Icon><path d="M3 3.500l6.500 6.500L3 16.500M10.500 3.500L17 10l-6.500 6.500" stroke={INK} strokeWidth="2.300" /></Icon></Tool>
        <Tool $w={8}><ToolRule $h={42} /></Tool>
        <Tool $w={40}><Icon size={16} box="0 0 16 16"><path d="M1 1.700h14M1 8h14M1 14.300h14" stroke={INK} strokeWidth="2.400" /></Icon></Tool>
        <Tool $w={4} />
      </Toolbar>

      <BookmarkBar>
        {bookmarks.map((b) => (
          <Bookmark key={b.label} $w={b.w} $gap={b.gap ?? 5} $ls={b.ls ?? -0.5}>
            {b.icon}
            <BookmarkLabel>{b.label}</BookmarkLabel>
          </Bookmark>
        ))}
      </BookmarkBar>

      <Viewport>
        <Page>
          <Header as="header">
            <Logo />
            <Nav>
              <NavItem $w={82} $on>
                <Icon w={26} h={24} box="0 0 26 24">
                  <path d="M3.500 13.500L13 5l9.500 8.500V24h-7v-6h-4v6h-8z" fill="#fff" />
                  <path d="M1.300 12.500L13 2l11.700 10.500" stroke="#555" strokeWidth="4.400" strokeLinecap="butt" />
                  <path d="M1.300 12.500L13 2l11.700 10.500" stroke="#fff" strokeWidth="2.600" strokeLinecap="butt" />
                  <path d="M18 1h4v8l-4-3.500z" fill="#fff" />
                </Icon>
              </NavItem>
              <NavItem $w={100}>ABOUT</NavItem>
              <NavItem $w={112} $on>
                ACCOUNT
                <Dropdown>
                  <DropdownItem>Profile</DropdownItem>
                  <DropdownItem>Logout</DropdownItem>
                </Dropdown>
              </NavItem>
            </Nav>
          </Header>
          <BandArt />
          <Hero>
            <Title>NUS C.A.P 5.0</Title>
            <Subtitle $top={25}>Search for your module</Subtitle>
            <SearchInput type="text" />
            <Submit>Submit Query</Submit>
            <Subtitle $top={36}>OR click on any of the faculties to start discussing now!</Subtitle>
          </Hero>
          <Cards>
            {faculties.map((f) => (
              <Card key={f.name} $h={f.h}>
                <CardHead $h={f.head} $pad={f.pad} $gap={f.gap}>
                  {f.icon}
                  <CardTitle>{f.name}</CardTitle>
                </CardHead>
                <CardBody $top={f.top}>
                  <ul>
                    {f.topics.map((t) => <Topic key={t}>{t}</Topic>)}
                  </ul>
                  <LinkButton $w={f.link}><ChainIcon /></LinkButton>
                </CardBody>
              </Card>
            ))}
          </Cards>
        </Page>
        <ScrollTrack>
          <ScrollButton><Icon size={10} box="0 0 10 10"><path d="M.5 7.500L5 2.500l4.500 5" stroke="#555" strokeWidth="1.400" /></Icon></ScrollButton>
          <ScrollThumb><Icon size={10} box="0 0 10 10"><path d="M.5 1.500h9M.5 5h9M.5 8.500h9" stroke="#555" strokeWidth="1.400" /></Icon></ScrollThumb>
          <ScrollButton><Icon size={10} box="0 0 10 10"><path d="M.5 2.500L5 7.500l4.500-5" stroke="#555" strokeWidth="1.400" /></Icon></ScrollButton>
        </ScrollTrack>
        <StatusText>localhost:8000/pyp/#</StatusText>
      </Viewport>

      <Taskbar>
        <Task><Icon><path d="M0 3l9-1.300v7.800H0zM10 1.500L20 0v9.500H10zM0 10.500h9v7.800L0 17zM10 10.500h10V20l-10-1.500z" fill="#fff" /></Icon></Task>
        <Task><Icon><circle cx="10" cy="10" r="8.500" stroke="#fff" strokeWidth="2.500" /></Icon></Task>
        <Task><Icon><path d="M.7 0v3.500h12V0M.7 20v-3.500h12V20M.7 5.500h12v8.500H.7zM18.500 0v3M18.500 10v10" stroke="#fff" strokeWidth="1.300" /><path d="M17.500 5h2v3h-2z" fill="#fff" /></Icon></Task>
        <Task $w={3} />
        {apps.map((a) => (
          <AppTask key={a.key} $running={a.running} $active={a.active}>
            {a.icon}
            {a.badge && <Badge>{a.badge}</Badge>}
          </AppTask>
        ))}
        <Spacer />
        <Task $w={49} $lift={4}><TrayText>EN</TrayText></Task>
        <Task $w={58}>
          <Icon size={20}><g stroke="#fff" strokeWidth="1.500"><circle cx="13.500" cy="4" r="3" /><path d="M10 12c.5-6 8-5 8.500 0" /><circle cx="6.500" cy="10" r="3" /><path d="M2 19c.5-7 8.500-7 9 0" /></g></Icon>
        </Task>
        <Task $w={32}><Icon size={16} box="0 0 16 16"><path d="M1 12l7-8 7 8" stroke="#fff" strokeWidth="1.500" /></Icon></Task>
        <Task $w={29}><Icon><path d="M1 7h3l4-4v14l-4-4H1z" stroke="#fff" strokeWidth="1.300" /><path d="M11 7c1 2 1 4 0 6M14 5c2 3 2 7 0 10M17 3c2.800 4 2.800 10 0 14" stroke="#fff" strokeWidth="1.300" /></Icon></Task>
        <Task $w={30}><Icon size={18}><path d="M5 0l5 3.300L5 6.500 0 3.300zM15 0l5 3.300-5 3.200-5-3.200zM5 7.500l5 3.300L5 14 0 10.800zM15 7.500l5 3.300-5 3.200-5-3.200zM10 13l4.500 3-4.500 3.500L5.500 16z" fill="#fff" /></Icon></Task>
        <Task $w={30}><Icon><path d="M.7 5h17v10.500H.7z" stroke="#fff" strokeWidth="1.500" /><path d="M2.500 7h8v6.500h-8zM18 8h2v4.500h-2z" fill="#fff" /></Icon></Task>
        <Task $w={32}><Icon><path d="M2.500 17C2 9 8 2.500 17 3M6 17.500C6 11 10.500 6.500 17 6.700M9.500 17.500c0-4.500 3-7.300 7.500-7.300M13 17.500c0-2.500 1.500-4 4-4" stroke="#e6e6e6" strokeWidth="1.300" /><circle cx="16.500" cy="17" r="1.700" fill="#fff" /></Icon></Task>
        <Task $w={43}><TrayText>ENG</TrayText></Task>
        <Clock>
          <span>11:48 AM</span>
          <span>7/30/2018</span>
        </Clock>
        <Notifications>
          <Icon><path d="M0 0h20v17h-6l-4 3v-3H0z" fill="#fff" /><path d="M4 5h12M4 9h12M4 13h7" stroke="#111" strokeWidth="1.300" strokeLinecap="butt" /></Icon>
          <NoticeCount>3</NoticeCount>
        </Notifications>
        <Task $w={5} />
      </Taskbar>
    </Screen>
  );
}
